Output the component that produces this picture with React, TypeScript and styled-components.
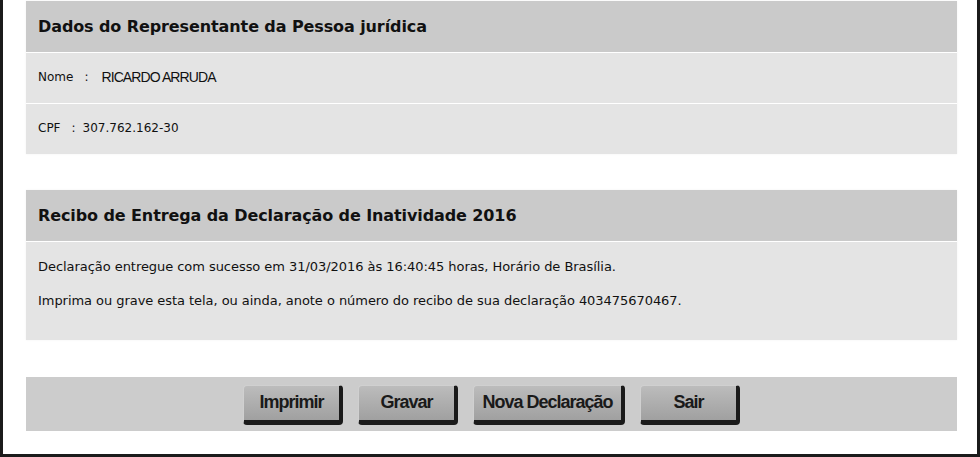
import React from 'react';
import styled, { createGlobalStyle } from 'styled-components';

const GlobalStyle = createGlobalStyle`
    html, body {
        margin: 0;
        padding: 0;
        background: #ffffff;
    }
`;

const Frame = styled.div`
    box-sizing: border-box;
    width: 980px;
    height: 457px;
    border: 3px solid #1b1b1b;
    border-top: none;
    padding: 1px 20px 0 23px;
    display: flex;
    flex-direction: column;
    font-family: "DejaVu Sans", Verdana, sans-serif;
    color: #111;
`;

const Panel = styled.section<{ top?: number }>`
    margin-top: ${({ top }) => top || 0}px;
    display: flex;
    flex-direction: column;
    gap: 1px;
    box-shadow: 0 0 2px rgba(0, 0, 0, 0.06);
`;

const PanelTitle = styled.h2`
    margin: 0;
    height: 51px;
    display: flex;
    align-items: center;
    padding-left: 12px;
    background: #cacaca;
    font-size: 16px;
    font-weight: 700;
    letter-spacing: -0.1px;
`;

const Row = styled.div`
    height: 50px;
    display: flex;
    align-items: center;
    padding: 0 0 2px 12px;
    box-sizing: border-box;
    background: #e4e4e4;
    font-size: 12px;
`;

const Sep = styled.span<{ space: number }>`
    margin: 0 ${({ space }) => space}px 0 11px;
`;

const NarrowValue = styled.span`
    font-family: "Liberation Sans", Arial, sans-serif;
    font-size: 14px;
    letter-spacing: -0.9px;
`;

const Receipt = styled.div`
    height: 98px;
    box-sizing: border-box;
    padding: 17px 12px 0;
    background: #e4e4e4;
    font-size: 13px;
    letter-spacing: -0.05px;

    p {
        margin: 0 0 18px;
        line-height: 16px;
    }
`;

const ButtonBar = styled.div`
    margin-top: 37px;
    height: 54px;
    background: #cccccc;
    display: flex;
    justify-content: center;
    align-items: center;
    gap: 15px;
    padding-top: 2px;
    box-sizing: border-box;
`;

const Button = styled.button<{ wide?: boolean }>`
    box-sizing: border-box;
    width: ${({ wide }) => (wide ? 152 : 100)}px;
    height: 40px;
    padding: 0 0 2px;
    border: 1px solid #d0d0d0;
    border-right: 4px solid #1a1a1a;
    border-bottom: 5px solid #1a1a1a;
    border-radius: 4px;
    background: linear-gradient(#bcbcbc, #a0a0a0);
    font-family: "Liberation Sans", Arial, sans-serif;
    font-size: 18px;
    font-weight: 700;
    letter-spacing: -1px;
    color: #1a1a1a;
    cursor: pointer;
`;

export default function App() {
    return (
        <>
            <GlobalStyle />
            <Frame>
                <Panel>
                    <PanelTitle>Dados do Representante da Pessoa jurídica</PanelTitle>
                    <Row>
                        <span>Nome</span>
                        <Sep space={13}>:</Sep>
                        <NarrowValue>RICARDO ARRUDA</NarrowValue>
                    </Row>
                    <Row>
                        <span>CPF</span>
                        <Sep space={7}>:</Sep>
                        <span>307.762.162-30</span>
                    </Row>
                </Panel>
                <Panel top={36}>
                    <PanelTitle>Recibo de Entrega da Declaração de Inatividade 2016</PanelTitle>
                    <Receipt>
                        <p>Declaração entregue com sucesso em 31/03/2016 às 16:40:45 horas, Horário de Brasília.</p>
                        <p>Imprima ou grave esta tela, ou ainda, anote o número do recibo de sua declaração 403475670467.</p>
                    </Receipt>
                </Panel>
                <ButtonBar>
                    <Button>Imprimir</Button>
                    <Button>Gravar</Button>
                    <Button wide>Nova Declaração</Button>
                    <Button>Sair</Button>
                </ButtonBar>
            </Frame>
        </>
    );
}
